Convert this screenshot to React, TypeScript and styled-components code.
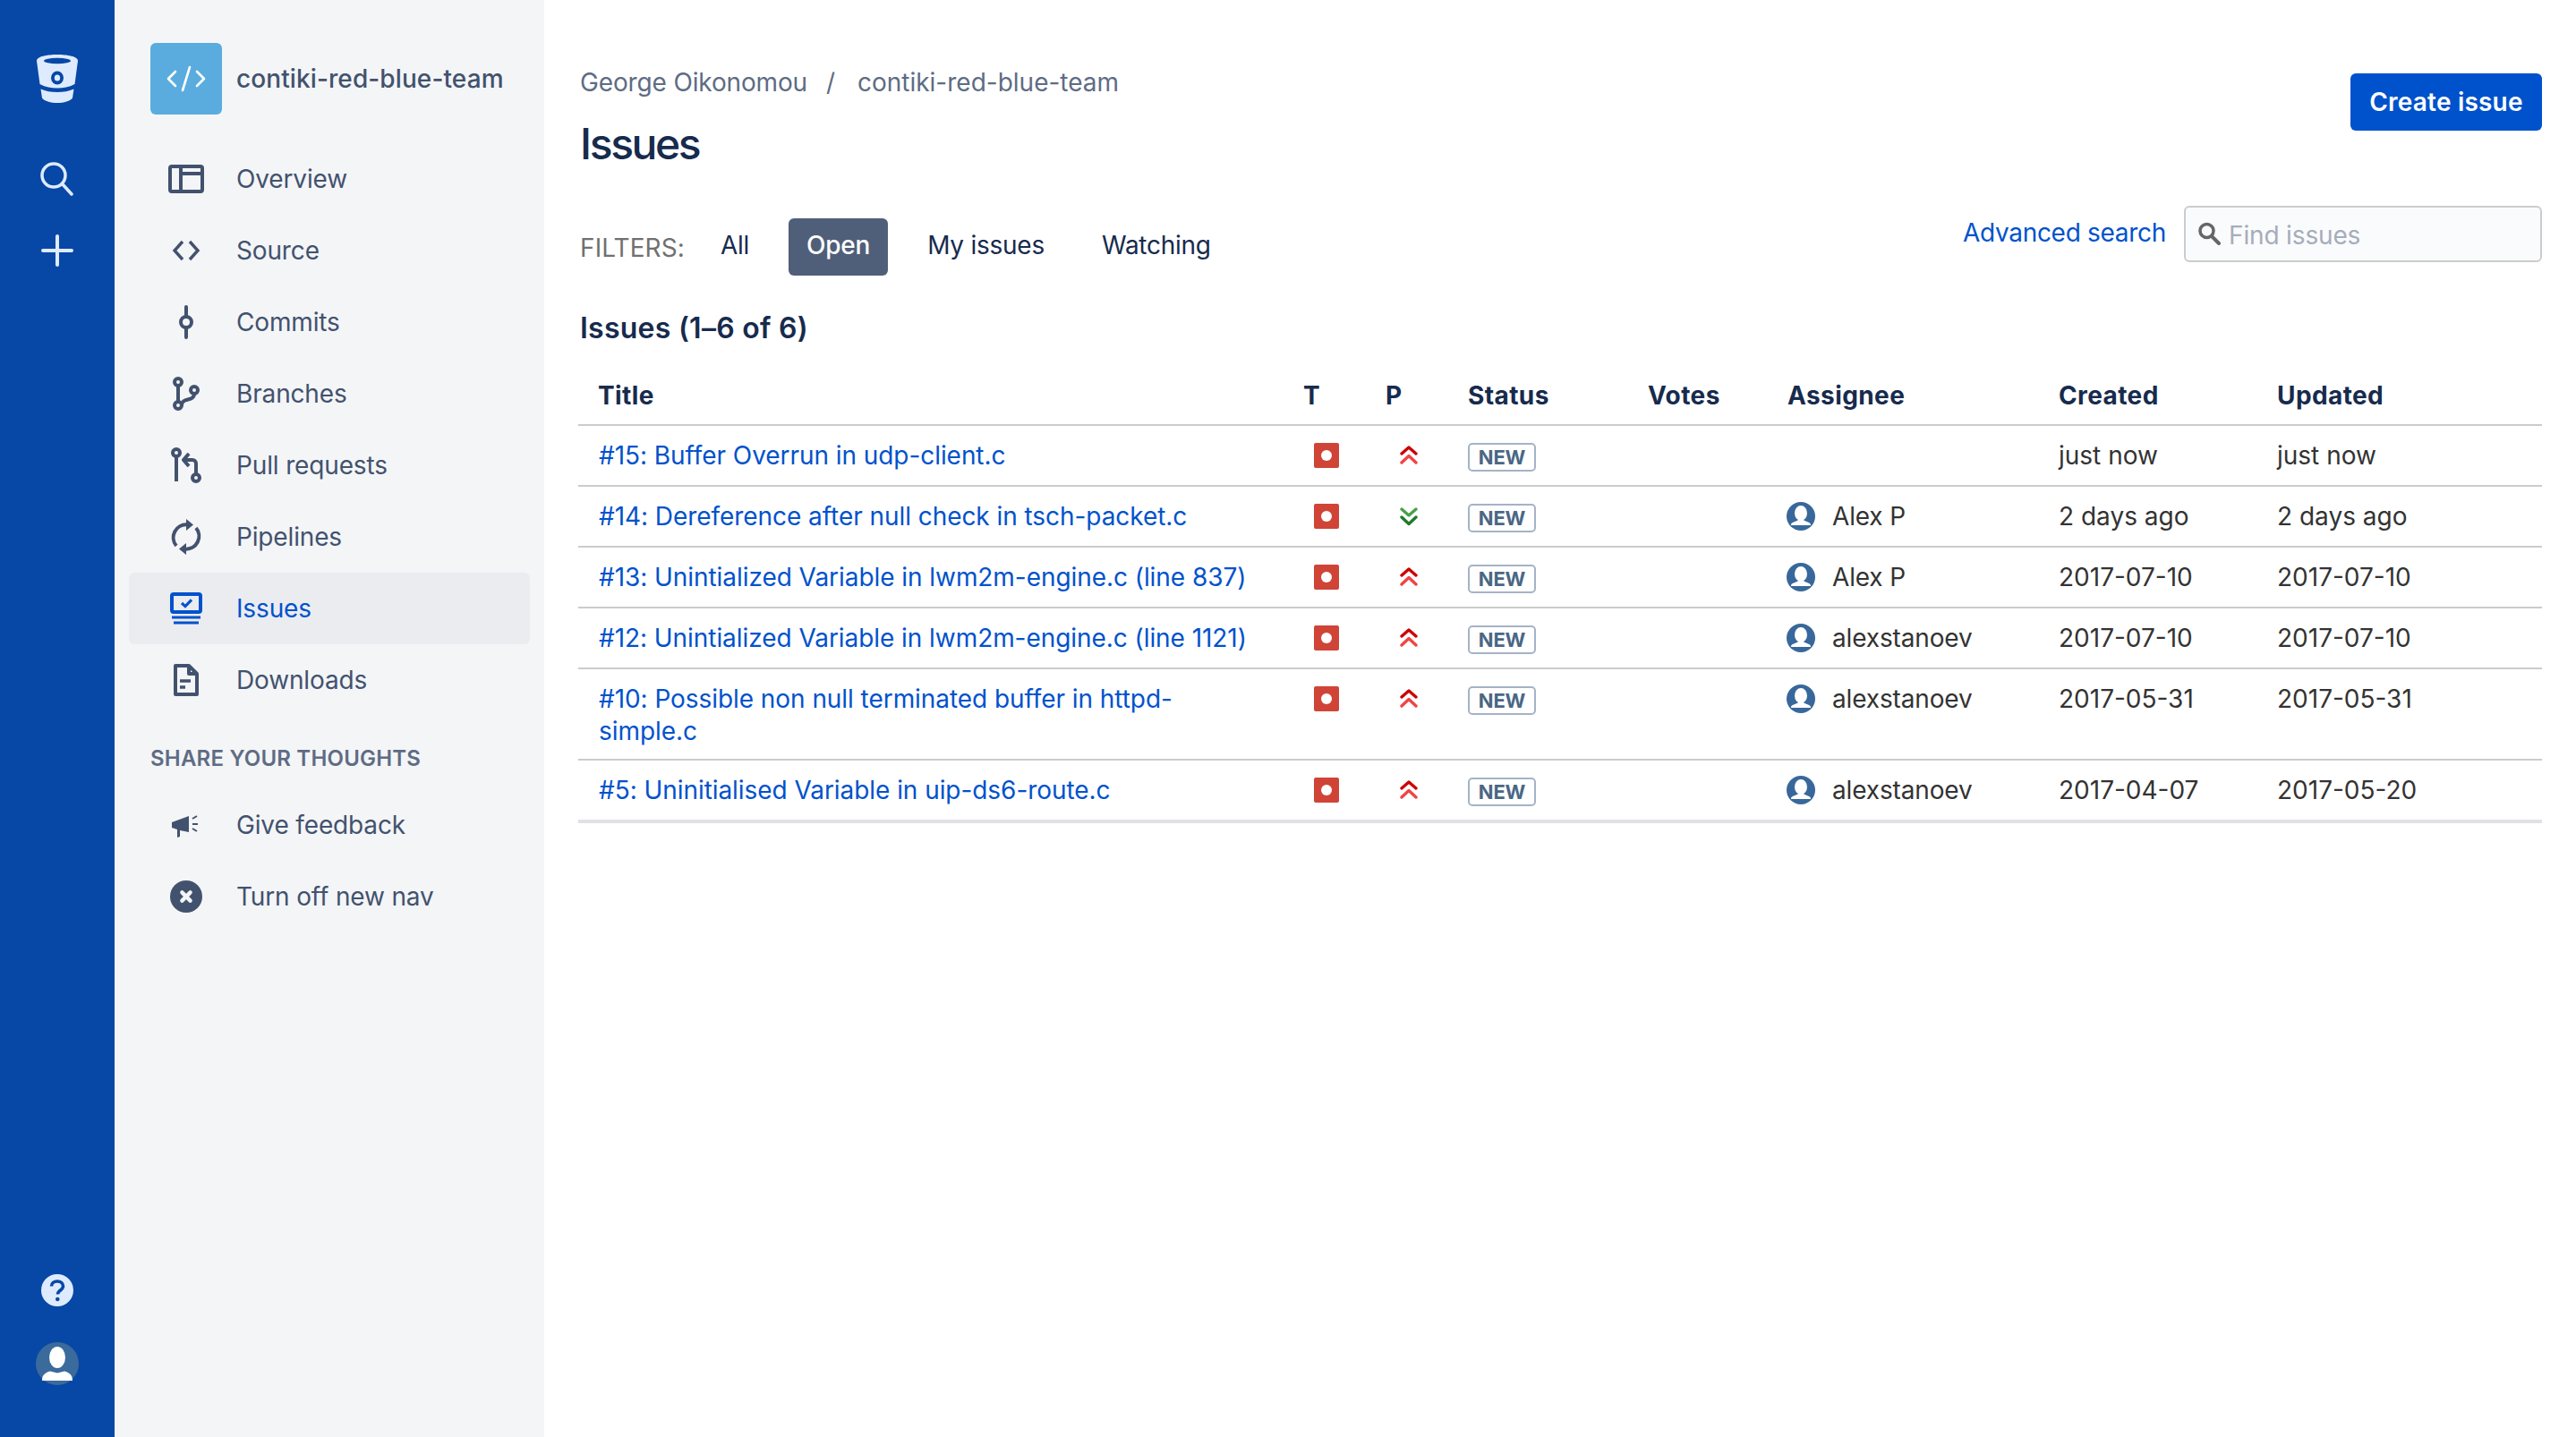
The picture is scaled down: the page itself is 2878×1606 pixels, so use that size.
import React from 'react';
import styled, { createGlobalStyle } from 'styled-components';

const GlobalStyle = createGlobalStyle`
  html, body {
    margin: 0;
    padding: 0;
    height: 100%;
    overflow: hidden;
    background: #fff;
    font-family: Inter, "Noto Sans", "Liberation Sans", sans-serif;
    font-size: 28px;
    -webkit-font-smoothing: antialiased;
  }
  * { box-sizing: border-box; }
`;

const Page = styled.div`
  display: flex;
  height: 1606px;
`;

const GlobalNav = styled.nav`
  width: 128px;
  flex: none;
  background: #0747a6;
  display: flex;
  flex-direction: column;
  align-items: center;
  justify-content: space-between;
  padding: 61px 0 58px;
`;

const GlobalGroup = styled.div`
  display: flex;
  flex-direction: column;
  align-items: center;
`;

const LogoSvg = styled.svg`
  display: block;
  margin-bottom: 66px;
`;

const SearchSvg = styled.svg`
  display: block;
  margin-bottom: 43px;
`;

const HelpSvg = styled.svg`
  display: block;
  margin-bottom: 40px;
`;

const ProductNav = styled.aside`
  width: 480px;
  flex: none;
  background: #f4f5f7;
  padding: 48px 16px 0;
`;

const RepoHeader = styled.div`
  display: flex;
  align-items: center;
  gap: 16px;
  padding-left: 24px;
  margin-bottom: 32px;
`;

const RepoIcon = styled.div`
  width: 80px;
  height: 80px;
  border-radius: 6px;
  background: #5aacdf;
  display: flex;
  align-items: center;
  justify-content: center;
`;

const RepoName = styled.div`
  color: #42526e;
  font-weight: 500;
  font-size: 28px;
  letter-spacing: 0.1px;
`;

const NavItem = styled.a<{ $active?: boolean }>`
  display: flex;
  align-items: center;
  height: 80px;
  padding-left: 40px;
  gap: 32px;
  border-radius: 6px;
  font-size: 28px;
  letter-spacing: -0.15px;
  color: ${(p) => (p.$active ? '#0052cc' : '#42526e')};
  background: ${(p) => (p.$active ? '#ebecf0' : 'transparent')};
`;

const NavIcon = styled.svg`
  width: 48px;
  height: 48px;
  flex: none;
  fill: none;
  stroke: currentColor;
  stroke-width: 2;
`;

const NavHeading = styled.div`
  color: #5e6c84;
  font-size: 24px;
  font-weight: 600;
  line-height: 32px;
  letter-spacing: 0.2px;
  padding: 32px 0 18px 24px;
`;

const Main = styled.main`
  flex: 1;
  min-width: 0;
  padding: 0 38px 0 40px;
`;

const TopRow = styled.header`
  display: flex;
  justify-content: space-between;
  align-items: flex-start;
  height: 189px;
`;

const Breadcrumbs = styled.div`
  display: flex;
  color: #5e6c84;
  font-size: 28px;
  line-height: 40px;
  margin-top: 72px;
  gap: 20px;
  letter-spacing: -0.15px;
`;

const CrumbSeparator = styled.span`
  margin-left: 1px;
  margin-right: 5px;
`;

const RepoCrumb = styled.span`
  letter-spacing: 0;
`;

const PageTitle = styled.h1`
  margin: 21px 0 0;
  color: #172b4d;
  font-size: 48px;
  line-height: 56px;
  font-weight: 500;
  letter-spacing: -2.4px;
`;

const CreateButton = styled.button`
  width: 214px;
  height: 64px;
  margin-top: 82px;
  border: 0;
  border-radius: 6px;
  background: #0052cc;
  color: #fff;
  font: 600 28px Inter, sans-serif;
  letter-spacing: 0.2px;
`;

const FilterRow = styled.div`
  display: flex;
  justify-content: space-between;
  align-items: flex-start;
  margin-top: 41px;
`;

const Filters = styled.div`
  display: flex;
  align-items: center;
  gap: 24px;
  margin-top: 14px;
`;

const FilterLabel = styled.span`
  color: #707070;
  font-size: 28px;
  margin-right: -4px;
  padding-top: 2px;
  letter-spacing: 0.1px;
`;

const FilterItem = styled.a<{ $active?: boolean }>`
  display: block;
  height: 64px;
  line-height: 60px;
  padding: 0 20px;
  border-radius: 6px;
  font-size: 28px;
  letter-spacing: -0.25px;
  color: ${(p) => (p.$active ? '#fff' : '#172b4d')};
  background: ${(p) => (p.$active ? '#505f79' : 'transparent')};
  font-weight: ${(p) => (p.$active ? 500 : 400)};
`;

const SearchArea = styled.div`
  display: flex;
  align-items: center;
  gap: 20px;
`;

const TextLink = styled.a`
  color: #0052cc;
  font-size: 28px;
  letter-spacing: -0.3px;
  margin-top: -3px;
`;

const SearchBox = styled.div`
  position: relative;
  width: 400px;
  height: 63px;
`;

const SearchInput = styled.input`
  width: 100%;
  height: 100%;
  border: 2px solid #ccc;
  border-radius: 6px;
  background: #fafbfc;
  padding: 3px 0 0 48px;
  font: 28px Inter, sans-serif;
  letter-spacing: -0.15px;
  &::placeholder { color: #a5adba; opacity: 1; }
`;

const SearchGlyph = styled.svg`
  position: absolute;
  left: 15px;
  top: 18px;
`;

const SectionTitle = styled.h2`
  margin: 39px 0 0;
  color: #172b4d;
  font-size: 32px;
  line-height: 40px;
  font-weight: 600;
  letter-spacing: 0.25px;
`;

const Table = styled.table`
  width: calc(100% + 2px);
  margin: 21px 0 0 -2px;
  border-collapse: separate;
  border-spacing: 0;
  table-layout: fixed;
  font-size: 28px;

  tbody tr:last-child td {
    border-bottom: 4px solid #dfe1e6;
  }
`;

const Th = styled.th<{ $w?: number; $first?: boolean }>`
  width: ${(p) => (p.$w ? `${p.$w}px` : 'auto')};
  text-align: left;
  color: #172b4d;
  font-weight: 700;
  font-size: 28px;
  line-height: 36px;
  letter-spacing: 0.4px;
  padding: 16px 20px 14px ${(p) => (p.$first ? 22 : 20)}px;
  border-bottom: 2px solid #ccc;
`;

const Td = styled.td`
  vertical-align: top;
  color: #333;
  font-size: 28px;
  line-height: 36px;
  letter-spacing: 0;
  padding: 15px 20px 15px;
  border-bottom: 2px solid #ccc;
`;

const TitleCell = styled(Td)`
  padding-bottom: 13px;
`;

const TitleLink = styled.a`
  color: #0052cc;
  padding-left: 3px;
  display: block;
  letter-spacing: -0.06px;
`;

const IconCell = styled.div`
  height: 36px;
  display: flex;
  align-items: center;
  svg { display: block; }
`;

const TypeSvg = styled.svg`
  margin-left: 12px;
`;

const PrioritySvg = styled.svg`
  margin-left: 16px;
`;

const Lozenge = styled.span`
  display: inline-block;
  width: 76px;
  height: 32px;
  margin-top: 4px;
  border: 2px solid #a5b3c7;
  border-radius: 5px;
  color: #4a6785;
  font-size: 22px;
  font-weight: 700;
  line-height: 28px;
  text-align: center;
  letter-spacing: -0.2px;
  vertical-align: top;
`;

const Assignee = styled.div`
  display: flex;
  align-items: center;
  gap: 19px;
  height: 36px;
  margin-left: -1px;
  letter-spacing: -0.15px;
`;

const Priority = ({ up = true }: { up?: boolean }) => (
  <PrioritySvg width="20" height="22" viewBox="0 0 20 22" fill="none" strokeWidth="3.400" strokeLinecap="round" strokeLinejoin="round">
    {up ? (
      <>
        <path d="M2 9 L10 2 L18 9" stroke="#c00" />
        <path d="M2 19 L10 11.500 L18 19" stroke="#f04545" />
      </>
    ) : (
      <>
        <path d="M2 3 L10 10 L18 3" stroke="#4aa04a" />
        <path d="M2 12 L10 19.500 L18 12" stroke="#207a2c" />
      </>
    )}
  </PrioritySvg>
);

const UserAvatar = () => (
  <svg width="32" height="32" viewBox="0 0 32 32">
    <circle cx="16" cy="16" r="16" fill="#38689b" />
    <ellipse cx="16" cy="12.500" rx="7" ry="8.500" fill="#fff" />
    <path d="M5 25c1-3 6-3 8-5h6c2 2 7 2 8 5v1H5z" fill="#fff" />
  </svg>
);

type Row = {
  title: string;
  up?: boolean;
  assignee?: string;
  created: string;
  updated: string;
};

const rows: Row[] = [
  { title: '#15: Buffer Overrun in udp-client.c', created: 'just now', updated: 'just now' },
  { title: '#14: Dereference after null check in tsch-packet.c', up: false, assignee: 'Alex P', created: '2 days ago', updated: '2 days ago' },
  { title: '#13: Unintialized Variable in lwm2m-engine.c (line 837)', assignee: 'Alex P', created: '2017-07-10', updated: '2017-07-10' },
  { title: '#12: Unintialized Variable in lwm2m-engine.c (line 1121)', assignee: 'alexstanoev', created: '2017-07-10', updated: '2017-07-10' },
  { title: '#10: Possible non null terminated buffer in httpd-simple.c', assignee: 'alexstanoev', created: '2017-05-31', updated: '2017-05-31' },
  { title: '#5: Uninitialised Variable in uip-ds6-route.c', assignee: 'alexstanoev', created: '2017-04-07', updated: '2017-05-20' },
];

export default function App() {
  return (
    <Page>
      <GlobalStyle />
      <GlobalNav>
        <GlobalGroup>
          <LogoSvg width="46" height="54" viewBox="0 0 46 54">
            <path d="M0 7C0 2 12 0 23 0s23 2 23 7l-3.500 26C36 36.500 30 37.500 23 37.500S10 36.500 3.500 33z" fill="#deebff" />
            <path d="M4.500 38.500C10 41 16 42 23 42s13-1 18.500-3.500l-1.500 10C38 52 30 54 23 54S8 52 6 48.500z" fill="#deebff" />
            <ellipse cx="23" cy="7" rx="15" ry="3.200" fill="#0747a6" />
            <ellipse cx="23" cy="26" rx="7" ry="7.500" fill="#0747a6" />
            <ellipse cx="23" cy="26" rx="3.200" ry="3.500" fill="#deebff" />
          </LogoSvg>
          <SearchSvg width="38" height="38" viewBox="0 0 38 38" fill="none" stroke="#deebff" strokeWidth="3.500" strokeLinecap="round">
            <circle cx="15" cy="15" r="13" />
            <path d="M25 25 L35 36" />
          </SearchSvg>
          <svg width="36" height="36" viewBox="0 0 36 36" stroke="#deebff" strokeWidth="4" strokeLinecap="round">
            <path d="M18 2v32M2 18h32" />
          </svg>
        </GlobalGroup>
        <GlobalGroup>
          <HelpSvg width="36" height="36" viewBox="0 0 36 36">
            <circle cx="18" cy="18" r="18" fill="#deebff" />
            <path d="M11.500 13.500c0-3.500 3-5.500 6.500-5.500s6.500 2 6.500 5.500c0 4.500-6 4.500-6 9" fill="none" stroke="#0747a6" strokeWidth="3.600" />
            <circle cx="18.300" cy="28" r="2.300" fill="#0747a6" />
          </HelpSvg>
          <svg width="48" height="48" viewBox="0 0 48 48">
            <circle cx="24" cy="24" r="24" fill="#3b6a9c" />
            <ellipse cx="24" cy="17" rx="9" ry="12" fill="#fff" />
            <path d="M7 43c0-7 4-9 9-10.500l8 2 8-2c5 1.500 9 3.500 9 10.500z" fill="#fff" />
          </svg>
        </GlobalGroup>
      </GlobalNav>

      <ProductNav>
        <RepoHeader>
          <RepoIcon>
            <svg width="44" height="32" viewBox="0 0 44 32" fill="none" stroke="#fff" strokeWidth="2.600" strokeLinecap="round" strokeLinejoin="round">
              <path d="M10 8 L2 16 L10 24 M34 8 L42 16 L34 24 M26 3 L18 29" />
            </svg>
          </RepoIcon>
          <RepoName>contiki-red-blue-team</RepoName>
        </RepoHeader>

        <NavItem>
          <NavIcon viewBox="0 0 24 24"><rect x="3" y="5" width="18" height="14" rx="1" /><path d="M9 5v14M9 9h12" /></NavIcon>
          Overview
        </NavItem>
        <NavItem>
          <NavIcon viewBox="0 0 24 24"><path d="M10 7l-4.500 5 4.500 5M14 7l4.500 5-4.500 5" strokeWidth="1.700" /></NavIcon>
          Source
        </NavItem>
        <NavItem>
          <NavIcon viewBox="0 0 24 24" strokeLinecap="round"><circle cx="12" cy="12" r="3" /><path d="M12 3.500V9M12 15v5.500" /></NavIcon>
          Commits
        </NavItem>
        <NavItem>
          <NavIcon viewBox="0 0 24 24"><circle cx="7.500" cy="5.500" r="2" /><circle cx="7.500" cy="18.500" r="2" /><circle cx="16.500" cy="10" r="2" /><path d="M7.500 7.500v9M16.500 12c0 4.500-7 2-7 6.500" /></NavIcon>
          Branches
        </NavItem>
        <NavItem>
          <NavIcon viewBox="0 0 24 24"><circle cx="6.500" cy="5" r="2" /><circle cx="17.500" cy="19" r="2" /><path d="M6.500 7v14M17.500 17v-6a2 2 0 0 0-2-2H11" /><path d="M13.500 5.500 L10.500 9 L13.500 12.500" strokeLinejoin="round" /></NavIcon>
          Pull requests
        </NavItem>
        <NavItem>
          <NavIcon viewBox="0 0 24 24"><path d="M12.500 5.200A7.200 7.200 0 0 0 6.500 17M11.500 18.800A7.200 7.200 0 0 0 17.500 7" /><path d="M12 2 L16 5.200 L12 8.500z M12 15.500 L8 18.800 L12 22z" fill="currentColor" stroke="none" /></NavIcon>
          Pipelines
        </NavItem>
        <NavItem $active>
          <NavIcon viewBox="0 0 24 24"><rect x="4" y="4" width="16" height="10" rx="1" /><path d="M9.500 9l2 1.800 3.500-3.600" strokeWidth="1.600" /><path d="M4 17h16M5 20h14" strokeWidth="1.600" /></NavIcon>
          Issues
        </NavItem>
        <NavItem>
          <NavIcon viewBox="0 0 24 24" strokeLinejoin="round"><path d="M6 4h7.500L18 8.500V20H6z" /><path d="M13.500 4v4.500H18" /><path d="M8.500 12.500h6M8.500 16h3" strokeWidth="1.800" /></NavIcon>
          Downloads
        </NavItem>

        <NavHeading>SHARE YOUR THOUGHTS</NavHeading>

        <NavItem>
          <NavIcon viewBox="0 0 24 24">
            <path d="M4 10.500l9.500-3.500v9L8.500 15v3.500l-1.500.5v-4.500L4 13.500z" fill="currentColor" stroke="none" />
            <path d="M15.500 8.500l2.500-1.500M15.500 11.500h3M15.500 14l2.500 1.500" strokeWidth="1" />
          </NavIcon>
          Give feedback
        </NavItem>
        <NavItem>
          <NavIcon viewBox="0 0 24 24">
            <circle cx="12" cy="12" r="9" fill="currentColor" stroke="none" />
            <path d="M9.700 9.700l4.600 4.600M14.300 9.700l-4.600 4.600" stroke="#f4f5f7" strokeWidth="2.200" strokeLinecap="round" />
          </NavIcon>
          Turn off new nav
        </NavItem>
      </ProductNav>

      <Main>
        <TopRow>
          <div>
            <Breadcrumbs>
              <span>George Oikonomou</span>
              <CrumbSeparator>/</CrumbSeparator>
              <RepoCrumb>contiki-red-blue-team</RepoCrumb>
            </Breadcrumbs>
            <PageTitle>Issues</PageTitle>
          </div>
          <CreateButton>Create issue</CreateButton>
        </TopRow>

        <FilterRow>
          <Filters>
            <FilterLabel>FILTERS:</FilterLabel>
            <FilterItem>All</FilterItem>
            <FilterItem $active>Open</FilterItem>
            <FilterItem>My issues</FilterItem>
            <FilterItem>Watching</FilterItem>
          </Filters>
          <SearchArea>
            <TextLink>Advanced search</TextLink>
            <SearchBox>
              <SearchGlyph width="26" height="26" viewBox="0 0 26 26" fill="none" stroke="#666" strokeWidth="3.500">
                <circle cx="10.500" cy="10" r="7.500" />
                <path d="M16 16l8 8" strokeWidth="4" strokeLinecap="round" />
              </SearchGlyph>
              <SearchInput placeholder="Find issues" />
            </SearchBox>
          </SearchArea>
        </FilterRow>

        <SectionTitle>Issues (1–6 of 6)</SectionTitle>

        <Table>
          <thead>
            <tr>
              <Th $first>Title</Th>
              <Th $w={92}>T</Th>
              <Th $w={92}>P</Th>
              <Th $w={201}>Status</Th>
              <Th $w={156}>Votes</Th>
              <Th $w={303}>Assignee</Th>
              <Th $w={244}>Created</Th>
              <Th $w={316}>Updated</Th>
            </tr>
          </thead>
          <tbody>
            {rows.map((r) => (
              <tr key={r.title}>
                <TitleCell><TitleLink>{r.title}</TitleLink></TitleCell>
                <Td>
                  <IconCell>
                    <TypeSvg width="28" height="28" viewBox="0 0 28 28">
                      <rect width="28" height="28" rx="2" fill="#d04437" />
                      <circle cx="14" cy="14" r="6" fill="#fff" />
                    </TypeSvg>
                  </IconCell>
                </Td>
                <Td><IconCell><Priority up={r.up ?? true} /></IconCell></Td>
                <Td><Lozenge>NEW</Lozenge></Td>
                <Td />
                <Td>
                  {r.assignee && (
                    <Assignee>
                      <UserAvatar />
                      {r.assignee}
                    </Assignee>
                  )}
                </Td>
                <Td>{r.created}</Td>
                <Td>{r.updated}</Td>
              </tr>
            ))}
          </tbody>
        </Table>
      </Main>
    </Page>
  );
}
